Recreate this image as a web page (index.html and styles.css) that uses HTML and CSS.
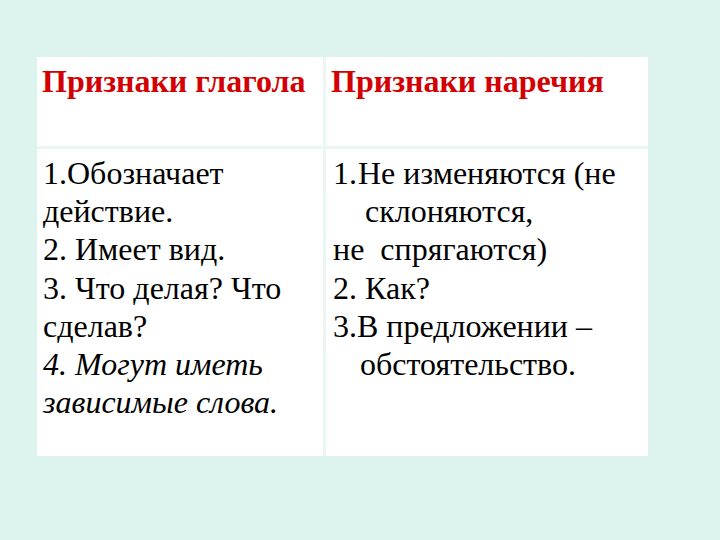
FILE: index.html
```html
<!DOCTYPE html>
<html lang="ru">
<head>
<meta charset="utf-8">
<link rel="stylesheet" href="styles.css">
</head>
<body>
<div class="page">
  <div class="table">
    <div class="cell head">Признаки глагола</div>
    <div class="cell head">Признаки наречия</div>
    <div class="cell body-cell">
      <p class="line">1.Обозначает действие.</p>
      <p class="line">2. Имеет вид.</p>
      <p class="line">3. Что делая? Что сделав?</p>
      <p class="line it">4. Могут иметь зависимые слова.</p>
    </div>
    <div class="cell body-cell col2">
      <p class="line hang"><span class="num">1.</span>Не изменяются (не склоняются,</p>
      <p class="line">не&nbsp; спрягаются)</p>
      <p class="line">2. Как?</p>
      <p class="line hang3">3.В предложении – обстоятельство.</p>
    </div>
  </div>
</div>
</body>
</html>
```
FILE: styles.css
```css
html, body {
  margin: 0;
  padding: 0;
}
body {
  width: 720px;
  height: 540px;
  background: #ddf4ee;
  font-family: "Liberation Serif", serif;
  overflow: hidden;
}
.page {
  padding: 57px 72px 0 37px;
}
.table {
  width: 611px;
  display: grid;
  grid-template-columns: 286px 322px;
  grid-template-rows: 89px 307px;
  gap: 3px;
  background: #e9f6f2;
}
.cell {
  background: #ffffff;
  font-family: "Liberation Serif", serif;
}
.head {
  color: #d20000;
  font-weight: bold;
  font-size: 32px;
  padding: 4px 0 0 5px;
  line-height: 40px;
  white-space: nowrap;
}
.body-cell {
  color: #000;
  font-size: 32px;
  line-height: 38.2px;
  padding: 5px 8px 0 6px;
}
.line {
  margin: 0;
  font-family: "Liberation Serif", serif;
  font-size: 32px;
  line-height: 38.2px;
  color: #000;
}
.col2 {
  padding-left: 7px;
  padding-right: 0;
}
.it {
  font-style: italic;
}
.hang {
  padding-left: 32px;
  text-indent: -32px;
}
.hang3 {
  padding-left: 27px;
  text-indent: -27px;
}
.num {
  display: inline-block;
  width: 25px;
  text-indent: 0;
  font-family: "Liberation Serif", serif;
}
```
